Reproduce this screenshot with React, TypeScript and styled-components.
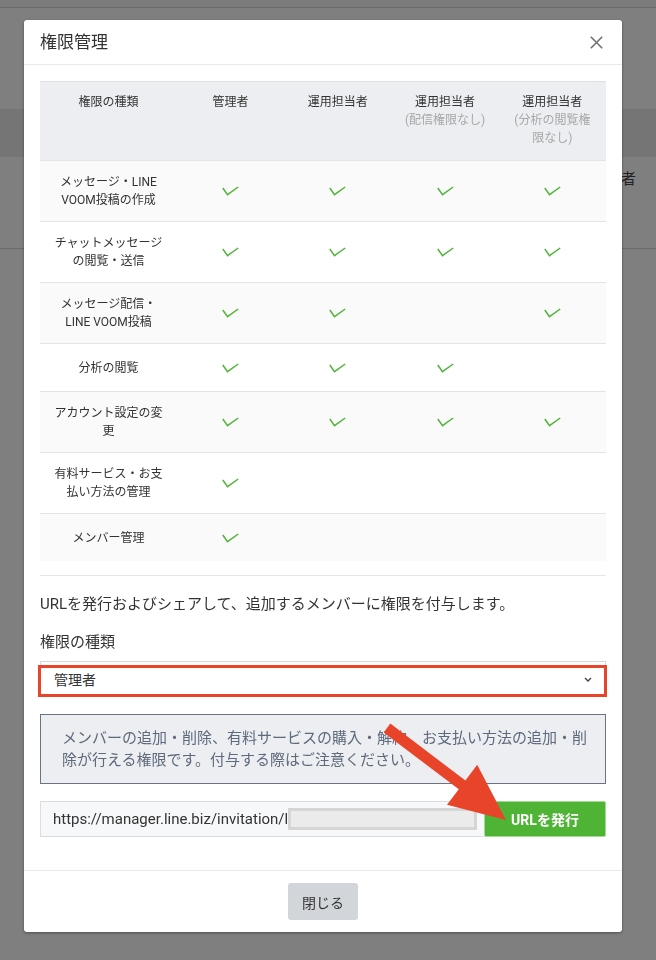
import React from 'react';
import styled, { createGlobalStyle } from 'styled-components';

const GlobalStyle = createGlobalStyle`
  html, body {
    margin: 0;
    padding: 0;
  }
  body {
    width: 656px;
    height: 960px;
    overflow: hidden;
    background: #ffffff;
    font-family: Roboto, "Noto Sans CJK JP", sans-serif;
    color: #333333;
  }
  * {
    box-sizing: border-box;
  }
`;

// Page behind the dialog
const Page = styled.div`
  height: 960px;
  background: #ffffff;
`;

const PageTop = styled.div`
  height: 8px;
  background: #f6f6f6;
  border-bottom: 1px solid #d6d6d6;
`;

const PageTable = styled.div`
  margin-top: 101px;
`;

const PageHeadRow = styled.div`
  height: 48px;
  background: #e9ebe9;
`;

const PageRow = styled.div`
  height: 92px;
  padding: 11px 20px 0 0;
  border-bottom: 1px solid #d6d6d6;
  text-align: right;
  font-size: 15px;
  line-height: 22px;
  color: #444444;
`;

// Dialog
const Backdrop = styled.div`
  position: fixed;
  inset: 0;
  background: rgba(0, 0, 0, 0.5);
`;

const Modal = styled.div`
  width: 598px;
  margin: 20px 0 0 24px;
  background: #ffffff;
  border-radius: 3px;
  box-shadow: 0 1px 3px rgba(0, 0, 0, 0.4);
`;

const ModalHeader = styled.header`
  height: 45px;
  display: flex;
  align-items: center;
  justify-content: space-between;
  padding: 0 19px 0 16px;
  border-bottom: 1px solid #e9e9e9;
`;

const Title = styled.h2`
  margin: 0;
  font-size: 17px;
  font-weight: 400;
  line-height: 24px;
  color: #333333;
`;

const CloseIcon = styled.button`
  width: 13px;
  height: 13px;
  padding: 0;
  border: none;
  background: transparent;
  display: flex;
  cursor: pointer;
`;

const ModalBody = styled.div`
  padding: 16px 16px 33px;
`;

const TableSection = styled.div`
  padding-bottom: 14px;
  border-bottom: 1px solid #e6e6e6;
`;

const Row = styled.div<{ $head?: boolean; $striped?: boolean }>`
  display: grid;
  grid-template-columns: 137px repeat(4, 1fr);
  min-height: ${p => (p.$head ? '79px' : '48px')};
  border-top: 1px solid ${p => (p.$head ? '#dfe1e5' : '#e3e4e7')};
  background: ${p => (p.$head ? '#eceef1' : p.$striped ? '#fafafa' : '#ffffff')};
`;

const Cell = styled.div<{ $head?: boolean }>`
  display: flex;
  flex-direction: column;
  align-items: center;
  justify-content: ${p => (p.$head ? 'flex-start' : 'center')};
  padding: ${p => (p.$head ? '11px 8px 13px' : '12px 8px')};
  font-size: 12px;
  line-height: 18px;
  text-align: center;
  color: #333333;
`;

const SubNote = styled.span`
  color: #a8a8a8;
`;

const Lead = styled.p`
  margin: 17px 0 0;
  font-size: 15px;
  line-height: 22px;
  color: #333333;
`;

const FieldLabel = styled.div`
  margin-top: 16px;
  font-size: 15px;
  line-height: 22px;
  color: #333333;
`;

const SelectBox = styled.div`
  position: relative;
  margin-top: 8px;
  height: 36px;
  display: flex;
  align-items: center;
  justify-content: space-between;
  padding: 0 13px;
  border: 1px solid #d6d6d6;
  background: #ffffff;
  font-size: 14px;
  color: #333333;

  /* red annotation frame */
  &::after {
    content: '';
    position: absolute;
    left: -3px;
    right: -2px;
    top: 3px;
    bottom: -1px;
    border: 3px solid #e8442a;
  }
`;

const InfoBox = styled.div`
  margin-top: 17px;
  padding: 12px 14px 12px 21px;
  border: 1px solid #6b7383;
  background: #eceef1;
  font-size: 15px;
  line-height: 22px;
  color: #5e6a7c;
`;

const UrlRow = styled.div`
  margin-top: 17px;
  display: flex;
  height: 36px;
`;

const UrlField = styled.div`
  flex: 1;
  display: flex;
  align-items: center;
  padding: 0 6px 0 12px;
  border: 1px solid #d9dce1;
  border-right: none;
  background: #f7f8fa;
  font-size: 15px;
  color: #333333;
  white-space: nowrap;
  overflow: hidden;
`;

const Redacted = styled.span`
  display: inline-block;
  flex-shrink: 0;
  width: 189px;
  height: 22px;
  background: #ebebeb;
  border: 3px solid #d5d5d5;
`;

const IssueButton = styled.button`
  width: 122px;
  border: 1px solid #9fdc92;
  border-radius: 2px;
  background: #4fb436;
  color: #ffffff;
  font-family: inherit;
  font-size: 14px;
  font-weight: 700;
  cursor: pointer;
`;

const ModalFooter = styled.footer`
  display: flex;
  justify-content: center;
  padding: 12px 0;
  border-top: 1px solid #e9e9e9;
`;

const FooterButton = styled.button`
  height: 37px;
  padding: 0 14px;
  border: none;
  border-radius: 3px;
  background: #d2d5da;
  color: #333333;
  font-family: inherit;
  font-size: 14px;
  cursor: pointer;
`;

const Annotation = styled.svg`
  position: fixed;
  left: 0;
  top: 0;
  pointer-events: none;
`;

const Check = () => (
  <svg width="17" height="10" viewBox="0 0 17 10">
    <path d="M0.8 2 L5.5 8.6 L16.2 1" fill="none" stroke="#52b43a" strokeWidth="1.5" />
  </svg>
);

const roles = [
  { label: ['メッセージ・LINE', 'VOOM投稿の作成'], checks: [true, true, true, true] },
  { label: ['チャットメッセージ', 'の閲覧・送信'], checks: [true, true, true, true] },
  { label: ['メッセージ配信・', 'LINE VOOM投稿'], checks: [true, true, false, true] },
  { label: ['分析の閲覧'], checks: [true, true, true, false] },
  { label: ['アカウント設定の変', '更'], checks: [true, true, true, true] },
  { label: ['有料サービス・お支', '払い方法の管理'], checks: [true, false, false, false] },
  { label: ['メンバー管理'], checks: [true, false, false, false] },
];

export default function App() {
  return (
    <>
      <GlobalStyle />
      <Page>
        <PageTop />
        <PageTable>
          <PageHeadRow />
          <PageRow>運用担当者</PageRow>
        </PageTable>
      </Page>

      <Backdrop>
        <Modal>
          <ModalHeader>
            <Title>権限管理</Title>
            <CloseIcon aria-label="閉じる">
              <svg width="13" height="13" viewBox="0 0 13 13">
                <path d="M0.8 0.8 L12.2 12.2 M12.2 0.8 L0.8 12.2" stroke="#707070" strokeWidth="1.6" />
              </svg>
            </CloseIcon>
          </ModalHeader>

          <ModalBody>
            <TableSection>
              <Row $head>
                <Cell $head>権限の種類</Cell>
                <Cell $head>管理者</Cell>
                <Cell $head>運用担当者</Cell>
                <Cell $head>
                  運用担当者
                  <SubNote>(配信権限なし)</SubNote>
                </Cell>
                <Cell $head>
                  運用担当者
                  <SubNote>(分析の閲覧権</SubNote>
                  <SubNote>限なし)</SubNote>
                </Cell>
              </Row>
              {roles.map((r, i) => (
                <Row key={i} $striped={i % 2 === 0}>
                  <Cell>
                    {r.label.map(l => (
                      <span key={l}>{l}</span>
                    ))}
                  </Cell>
                  {r.checks.map((c, j) => (
                    <Cell key={j}>{c && <Check />}</Cell>
                  ))}
                </Row>
              ))}
            </TableSection>

            <Lead>URLを発行およびシェアして、追加するメンバーに権限を付与します。</Lead>
            <FieldLabel>権限の種類</FieldLabel>
            <SelectBox>
              <span>管理者</span>
              <svg width="8" height="5" viewBox="0 0 8 5">
                <path d="M1 1 L4 4 L7 1" fill="none" stroke="#444" strokeWidth="1.4" />
              </svg>
            </SelectBox>

            <InfoBox>
              メンバーの追加・削除、有料サービスの購入・解約、お支払い方法の追加・削
              <br />
              除が行える権限です。付与する際はご注意ください。
            </InfoBox>

            <UrlRow>
              <UrlField>
                https://manager.line.biz/invitation/l
                <Redacted />
              </UrlField>
              <IssueButton>URLを発行</IssueButton>
            </UrlRow>
          </ModalBody>

          <ModalFooter>
            <FooterButton>閉じる</FooterButton>
          </ModalFooter>
        </Modal>
      </Backdrop>

      {/* red arrow pointing at the button */}
      <Annotation width="656" height="960" viewBox="0 0 656 960">
        <polygon
          points="390.3,723.6 465.4,780.4 477.2,764.8 506,820 447,804.8 458.8,789.2 383.7,732.4"
          fill="#e8442a"
        />
      </Annotation>
    </>
  );
}
